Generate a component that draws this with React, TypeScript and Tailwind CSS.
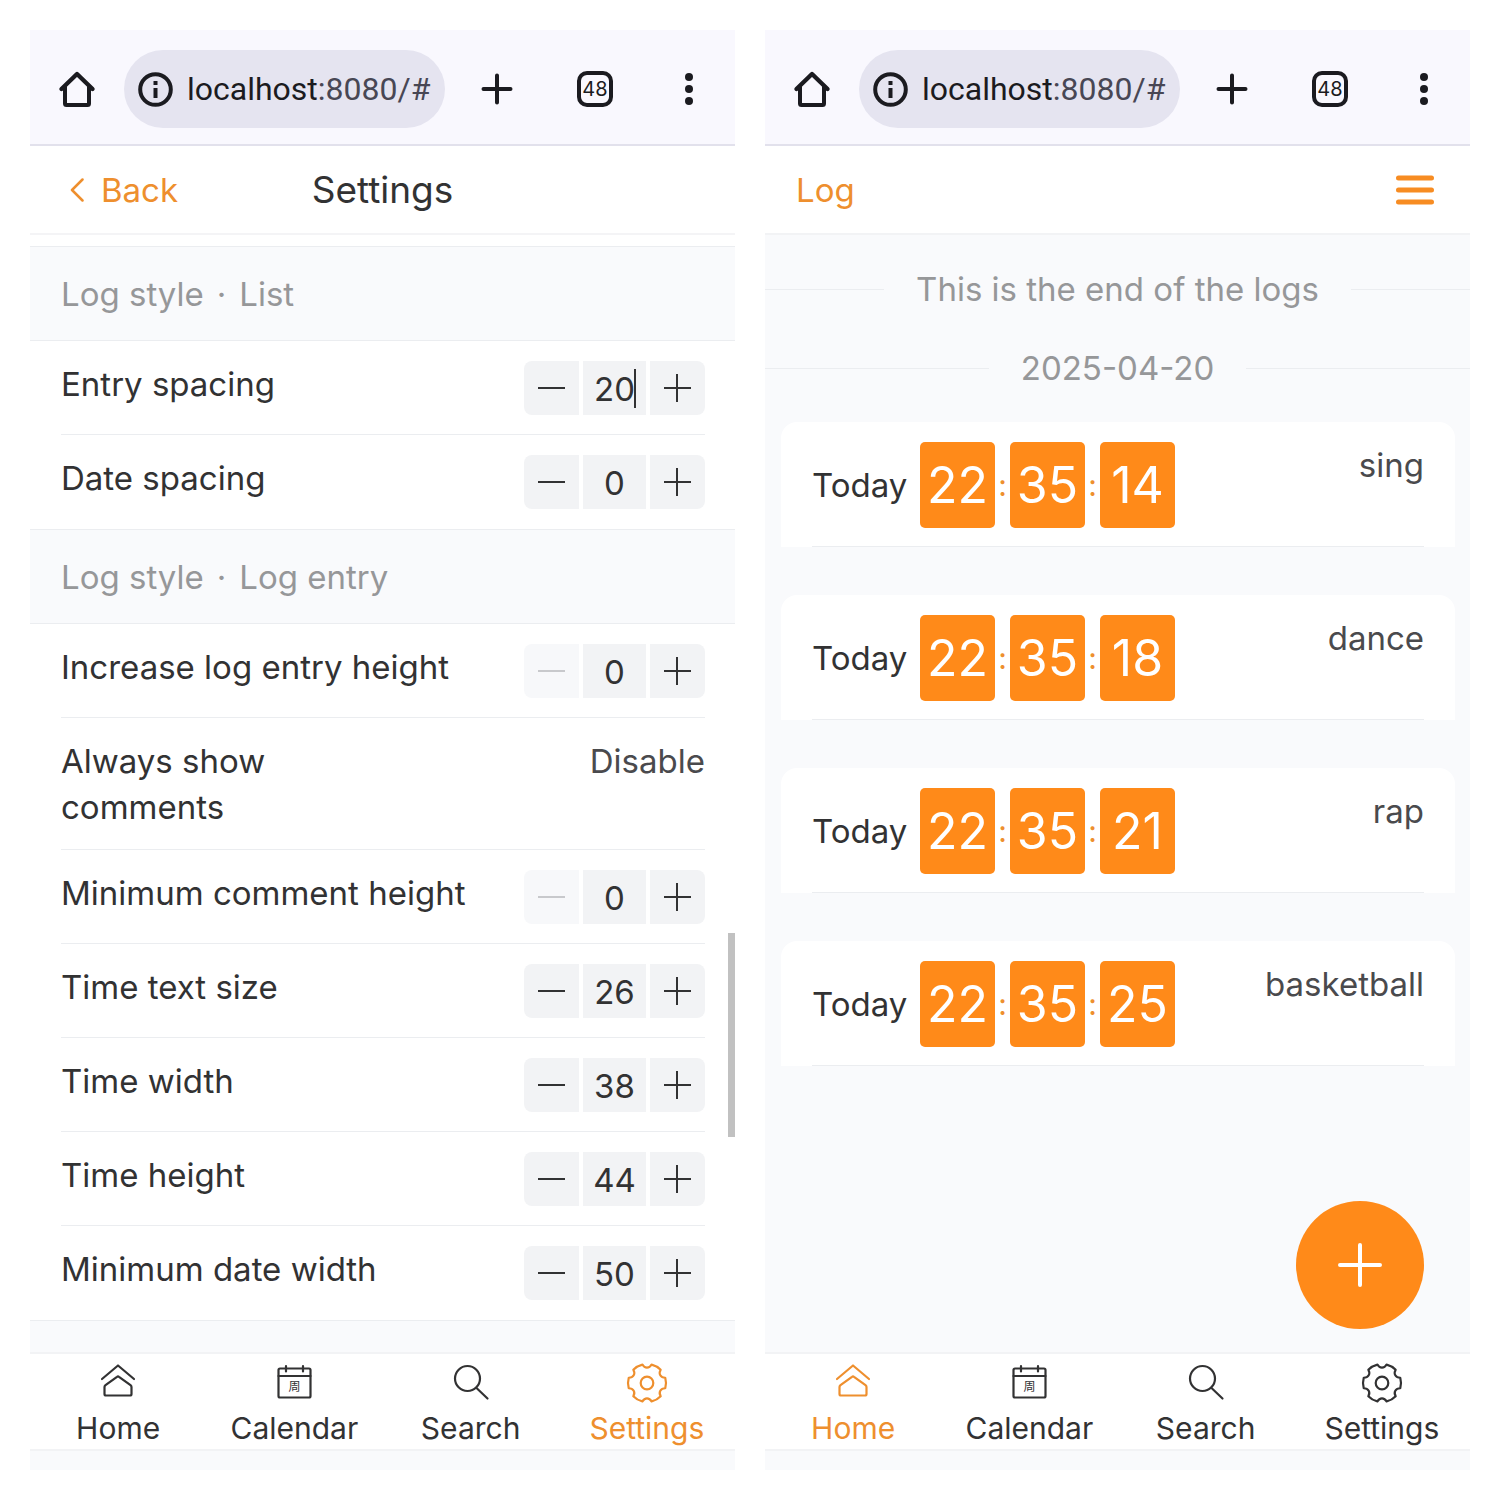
import React from "react";

type TabName = "Home" | "Calendar" | "Search" | "Settings";

function HomeOutline() {
  return (
    <svg width="38" height="38" viewBox="0 0 38 38" fill="none" stroke="#1b1b20" strokeWidth="4" strokeLinecap="round" strokeLinejoin="round" aria-hidden="true">
      <path d="M3.500 19 19 4 34.500 19" strokeWidth="4.400" />
      <path d="M7 17V33.500Q7 35 8.500 35H29.500Q31 35 31 33.500V17" />
    </svg>
  );
}

function BrowserBar() {
  return (
    <div className="flex h-[116px] shrink-0 items-center border-b-2 border-[#e2e1ec] bg-[#f9f8fe] pt-1 text-[#1b1b20]">
      <button aria-label="Home page" className="flex w-[94px] justify-center">
        <HomeOutline />
      </button>
      <button aria-label="Address" className="flex h-[78px] min-w-0 flex-1 items-center gap-[14px] rounded-full bg-[#e5e4f0] pl-[14px] font-[Roboto,sans-serif] text-[32px] leading-[40px]">
        <svg width="35" height="35" viewBox="0 0 35 35" className="shrink-0" aria-hidden="true">
          <circle cx="17.500" cy="17.500" r="15.300" fill="none" stroke="#1b1b20" strokeWidth="4" />
          <rect x="15.500" y="9" width="4" height="4" fill="#1b1b20" />
          <rect x="15.500" y="16" width="4" height="10" fill="#1b1b20" />
        </svg>
        <span className="whitespace-nowrap">
          localhost<span className="text-[#484754]">:8080/#</span>
        </span>
      </button>
      <button aria-label="New tab" className="flex w-[103px] justify-center">
        <svg width="32" height="32" viewBox="0 0 32 32" stroke="#1b1b20" strokeWidth="4" strokeLinecap="round" aria-hidden="true">
          <path d="M2.500 16H29.500M16 2.500V29.500" />
        </svg>
      </button>
      <button aria-label="48 open tabs" className="flex w-[94px] justify-center">
        <span className="flex size-[36px] items-center justify-center rounded-[10px] border-4 border-[#1b1b20] text-[20px] leading-none">48</span>
      </button>
      <button aria-label="More options" className="flex w-[93px] justify-center">
        <svg width="8" height="32" viewBox="0 0 8 32" fill="#1b1b20" aria-hidden="true">
          <circle cx="4" cy="4" r="4" />
          <circle cx="4" cy="16" r="4" />
          <circle cx="4" cy="28" r="4" />
        </svg>
      </button>
    </div>
  );
}

/* Six-lobed gear outline centred on (22, 22). */
const gearPath = (() => {
  const point = (deg: number, r: number) => {
    const a = (deg * Math.PI) / 180;
    return `${(22 + r * Math.cos(a)).toFixed(2)} ${(22 + r * Math.sin(a)).toFixed(2)}`;
  };
  let d = `M${point(-16, 19)}`;
  for (let lobe = 0; lobe < 360; lobe += 60) {
    d += `A19 19 0 0 1 ${point(lobe + 16, 19)}`;
    d += `C${point(lobe + 21, 14.5)} ${point(lobe + 39, 14.5)} ${point(lobe + 44, 19)}`;
  }
  return d + "Z";
})();

function TabIcon({ name }: { name: TabName }) {
  return (
    <svg width="44" height="44" viewBox="0 0 44 44" fill="none" stroke="currentColor" strokeWidth="2.200" strokeLinecap="round" strokeLinejoin="round" aria-hidden="true">
      {name === "Home" && (
        <>
          <path d="M6 18 22 4.500 38 18" />
          <path d="M8.500 26Q8.500 25 9.500 24.200L21 15.800Q22 15 23 15.800L34.500 24.200Q35.500 25 35.500 26V33Q35.500 34.500 34 34.500H10Q8.500 34.500 8.500 33Z" />
        </>
      )}
      {name === "Calendar" && (
        <>
          <rect x="6.500" y="7.500" width="32" height="29" rx="1.500" />
          <path d="M6.500 15H38.500M14 5V10.500M31 5V10.500" />
          <text x="22.500" y="29.500" textAnchor="middle" fontSize="12" fontFamily='"Noto Sans CJK SC", sans-serif' fill="currentColor" stroke="none">
            周
          </text>
        </>
      )}
      {name === "Search" && (
        <>
          <circle cx="18.500" cy="17.500" r="12.500" />
          <path d="M27.500 27 38.500 37.500" />
        </>
      )}
      {name === "Settings" && (
        <>
          <path d={gearPath} />
          <circle cx="22" cy="22" r="6.300" />
        </>
      )}
    </svg>
  );
}

const tabs: TabName[] = ["Home", "Calendar", "Search", "Settings"];

function TabBar({ active }: { active: TabName }) {
  return (
    <div className="shrink-0 bg-[#f9fafc] pb-[19px]">
      <nav className="grid h-[99px] grid-cols-4 border-y-2 border-[#f2f3f5] bg-white">
        {tabs.map((name) => (
          <a
            key={name}
            href={`#${name.toLowerCase()}`}
            aria-current={name === active ? "page" : undefined}
            className={`flex flex-col items-center pt-[7px] text-[30px] leading-[36px] ${name === active ? "text-[#ee8f2e]" : "text-[#323233]"}`}
          >
            <TabIcon name={name} />
            <span className="pt-[5px]">{name}</span>
          </a>
        ))}
      </nav>
    </div>
  );
}

function Stepper({ label, value, atMinimum, editing }: { label: string; value: string; atMinimum?: boolean; editing?: boolean }) {
  return (
    <div className="flex h-[54px] shrink-0 gap-1">
      <button
        aria-label={`Decrease ${label}`}
        disabled={atMinimum}
        className="flex w-[55px] items-center justify-center rounded-l-lg bg-[#f2f3f5] disabled:bg-[#f7f8fa] disabled:text-[#c8c9cc]"
      >
        <svg width="27" height="28" viewBox="0 0 27 28" stroke="currentColor" strokeWidth="2" aria-hidden="true">
          <path d="M0 14H27" />
        </svg>
      </button>
      <div className="relative w-[63px]">
        <input
          id={label}
          defaultValue={value}
          inputMode="numeric"
          className="h-full w-full bg-[#f2f3f5] pt-[2px] text-center text-[33px] leading-[40px] outline-none"
        />
        {editing && <span className="absolute top-[8px] right-[10px] h-[39px] w-[2px] bg-[#323233]" />}
      </div>
      <button aria-label={`Increase ${label}`} className="flex w-[55px] items-center justify-center rounded-r-lg bg-[#f2f3f5]">
        <svg width="27" height="28" viewBox="0 0 27 28" stroke="currentColor" strokeWidth="2" aria-hidden="true">
          <path d="M0 14H27M13 0V28" />
        </svg>
      </button>
    </div>
  );
}

interface Setting {
  label: string;
  value: string;
  choice?: boolean;
  atMinimum?: boolean;
  editing?: boolean;
}

const groups: { title: string; settings: Setting[] }[] = [
  {
    title: "List",
    settings: [
      { label: "Entry spacing", value: "20", editing: true },
      { label: "Date spacing", value: "0" },
    ],
  },
  {
    title: "Log entry",
    settings: [
      { label: "Increase log entry height", value: "0", atMinimum: true },
      { label: "Always show comments", value: "Disable", choice: true },
      { label: "Minimum comment height", value: "0", atMinimum: true },
      { label: "Time text size", value: "26" },
      { label: "Time width", value: "38" },
      { label: "Time height", value: "44" },
      { label: "Minimum date width", value: "50" },
    ],
  },
];

function SettingRow({ setting }: { setting: Setting }) {
  const { label, value, choice } = setting;
  return (
    <div className="mr-[30px] ml-[31px] flex items-start justify-between border-b border-[#ebedf0] pt-[20px] pb-[19px] text-[33px] leading-[46px] last:border-transparent">
      {choice ? (
        <button className="flex flex-1 justify-between text-left">
          <span className="w-1/2 pr-[60px]">{label}</span>
          <span className="text-[#4a4a4d]">{value}</span>
        </button>
      ) : (
        <>
          <label htmlFor={label}>{label}</label>
          <Stepper label={label} value={value} atMinimum={setting.atMinimum} editing={setting.editing} />
        </>
      )}
    </div>
  );
}

function SettingsScreen() {
  return (
    <section className="flex min-w-0 flex-col bg-white">
      <BrowserBar />
      <header className="grid h-[89px] shrink-0 grid-cols-3 items-center border-b-2 border-[#f4f4f6]">
        <button className="flex items-center gap-[17px] pl-[40px] text-[33px] leading-[40px] text-[#ee8f2e]">
          <svg width="14" height="24" viewBox="0 0 14 24" fill="none" stroke="currentColor" strokeWidth="2.500" strokeLinecap="round" strokeLinejoin="round" aria-hidden="true">
            <path d="M12.500 1.500 2 12 12.500 22.500" />
          </svg>
          Back
        </button>
        <h1 className="text-center text-[37px] leading-[46px]">Settings</h1>
      </header>
      <main className="relative flex-1 bg-[#f9fafc]">
        <div className="h-[11px] bg-white" />
        {groups.map((group) => (
          <React.Fragment key={group.title}>
            <h2 className="flex h-[95px] items-center gap-[13px] border-y border-[#ebedf0] px-[31px] text-[33px] leading-[46px] text-[#969799]">
              <span>Log style</span>
              <span>·</span>
              <span>{group.title}</span>
            </h2>
            <div className="bg-white">
              {group.settings.map((setting) => (
                <SettingRow key={setting.label} setting={setting} />
              ))}
            </div>
          </React.Fragment>
        ))}
        <div className="border-t border-[#ebedf0]" />
        <div className="absolute top-[698px] right-0 h-[204px] w-[7px] bg-[#c1c1c1]" />
      </main>
      <TabBar active="Settings" />
    </section>
  );
}

function Divider({ children }: { children: React.ReactNode }) {
  return (
    <div className="flex items-center gap-[32px] text-[33px] leading-[46px] text-[#969799] before:h-px before:flex-1 before:bg-[#ebedf0] after:h-px after:flex-1 after:bg-[#ebedf0]">
      {children}
    </div>
  );
}

const logs = [
  { time: ["22", "35", "14"], text: "sing" },
  { time: ["22", "35", "18"], text: "dance" },
  { time: ["22", "35", "21"], text: "rap" },
  { time: ["22", "35", "25"], text: "basketball" },
];

function LogScreen() {
  return (
    <section className="flex min-w-0 flex-col bg-[#f9fafc]">
      <BrowserBar />
      <header className="flex h-[89px] shrink-0 items-center justify-between border-b-2 border-[#f2f3f5] bg-white pr-[36px] pl-[31px]">
        <h1 className="text-[33px] leading-[40px] text-[#ee8f2e]">Log</h1>
        <button aria-label="Menu">
          <svg width="38" height="30" viewBox="0 0 38 30" stroke="#f78c22" strokeWidth="5" strokeLinecap="round" aria-hidden="true">
            <path d="M2.500 3H35.500M2.500 15H35.500M2.500 27H35.500" />
          </svg>
        </button>
      </header>
      <main className="relative flex-1 pt-[31px]">
        <Divider>This is the end of the logs</Divider>
        <div className="mt-[33px]">
          <Divider>2025-04-20</Divider>
        </div>
        <ul className="mt-[31px] mr-[15px] ml-4 flex flex-col gap-12">
          {logs.map((log) => (
            <li key={log.text} className="rounded-t-[16px] bg-white px-[31px] pt-[20px]">
              <div className="flex items-start justify-between border-b border-[#ebedf0] pb-[18px] text-[33px] leading-[46px]">
                <div className="flex items-center">
                  <span className="w-[108px] text-[#323233]">Today</span>
                  <time className="flex items-center">
                    {log.time.map((part, i) => (
                      <React.Fragment key={i}>
                        {i > 0 && <span className="w-[15px] text-center text-[30px] leading-[46px] text-[#ee8f2e]">:</span>}
                        <span className="flex h-[86px] w-[75px] items-center justify-center rounded-[5px] bg-[#ff8a19] text-[50px] leading-none text-white">{part}</span>
                      </React.Fragment>
                    ))}
                  </time>
                </div>
                <span className="text-[#4a4a4d]">{log.text}</span>
              </div>
            </li>
          ))}
        </ul>
        <button aria-label="Add log" className="absolute right-[46px] bottom-[23px] flex size-[128px] items-center justify-center rounded-full bg-[#ff8a19]">
          <svg width="44" height="44" viewBox="0 0 44 44" stroke="white" strokeWidth="4" strokeLinecap="round" aria-hidden="true">
            <path d="M2 22H42M22 2V42" />
          </svg>
        </button>
      </main>
      <TabBar active="Home" />
    </section>
  );
}

export default function App() {
  return (
    <div className="grid min-h-screen grid-cols-2 gap-[30px] bg-white p-[30px] font-['Inter',sans-serif] text-[#323233]">
      <SettingsScreen />
      <LogScreen />
    </div>
  );
}
